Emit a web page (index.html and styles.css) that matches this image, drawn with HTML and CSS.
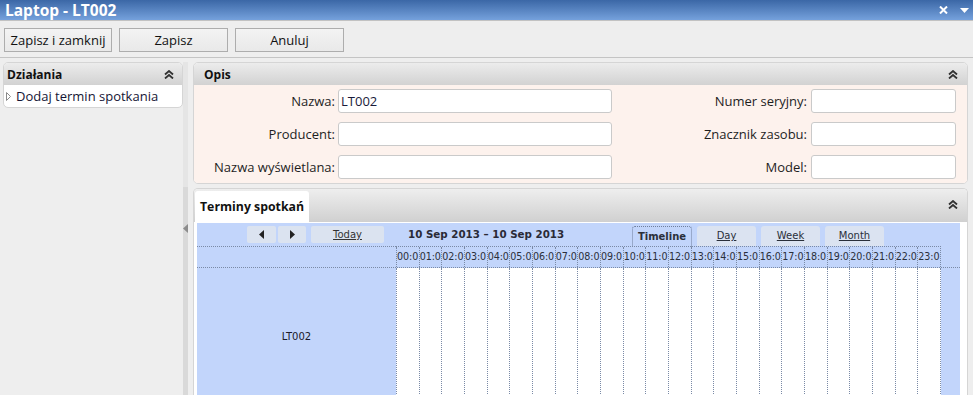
FILE: index.html
```html
<!DOCTYPE html>
<html lang="pl">
<head>
<meta charset="utf-8">
<title>Laptop - LT002</title>
<link rel="stylesheet" href="styles.css">
</head>
<body>
<div class="titlebar">
  <span class="title">Laptop - LT002</span>
  <span class="title-icons">
    <svg class="ico-close" width="9" height="8" viewBox="0 0 9 8"><path d="M1 0.5 L8 7.5 M8 0.5 L1 7.5" stroke="#fff" stroke-width="2"/></svg>
    <svg class="ico-menu" width="9" height="5" viewBox="0 0 9 5"><path d="M0 0 H9 L4.5 5 Z" fill="#fff"/></svg>
  </span>
</div>
<div class="toolbar">
  <button class="btn btn-first">Zapisz i zamknij</button>
  <button class="btn">Zapisz</button>
  <button class="btn">Anuluj</button>
</div>
<div class="main">
  <aside class="sidebar">
    <section class="card">
      <header class="card-head head-side">
        <span>Działania</span>
        <svg class="chev" width="10" height="9" viewBox="0 0 10 9"><path d="M1 4.5 L5 1 L9 4.5 M1 8.5 L5 5 L9 8.5" fill="none" stroke="#333" stroke-width="1.8"/></svg>
      </header>
      <div class="action-row">
        <svg class="tri" width="5" height="9" viewBox="0 0 5 9"><path d="M0.5 0.5 L4.5 4.5 L0.5 8.5 Z" fill="none" stroke="#8a8a8a" stroke-width="1"/></svg>
        <span>Dodaj termin spotkania</span>
      </div>
    </section>
  </aside>
  <div class="splitter">
    <svg class="split-arrow" width="5" height="9" viewBox="0 0 5 9"><path d="M5 0 L0 4.5 L5 9 Z" fill="#8c8c8c"/></svg>
  </div>
  <div class="content">
    <section class="card opis">
      <header class="card-head head-opis">
        <span>Opis</span>
        <svg class="chev" width="10" height="9" viewBox="0 0 10 9"><path d="M1 4.5 L5 1 L9 4.5 M1 8.5 L5 5 L9 8.5" fill="none" stroke="#333" stroke-width="1.8"/></svg>
      </header>
      <div class="form">
        <label class="lbl">Nazwa:</label><div class="inp">LT002</div>
        <label class="lbl lbl-r">Numer seryjny:</label><div class="inp"></div>
        <label class="lbl">Producent:</label><div class="inp"></div>
        <label class="lbl lbl-r">Znacznik zasobu:</label><div class="inp"></div>
        <label class="lbl">Nazwa wyświetlana:</label><div class="inp"></div>
        <label class="lbl lbl-r">Model:</label><div class="inp"></div>
      </div>
    </section>
    <section class="card terminy">
      <header class="tabbar">
        <span class="tab">Terminy spotkań</span>
        <svg class="chev" width="10" height="9" viewBox="0 0 10 9"><path d="M1 4.5 L5 1 L9 4.5 M1 8.5 L5 5 L9 8.5" fill="none" stroke="#333" stroke-width="1.8"/></svg>
      </header>
      <div class="sched-wrap">
        <div class="sched">
          <div class="sched-nav">
            <span class="nbtn nbtn-arrow"><svg width="5" height="9" viewBox="0 0 5 9"><path d="M5 0 L0 4.5 L5 9 Z" fill="#222"/></svg></span>
            <span class="nbtn nbtn-arrow nbtn-next"><svg width="5" height="9" viewBox="0 0 5 9"><path d="M0 0 L5 4.5 L0 9 Z" fill="#222"/></svg></span>
            <span class="nbtn nbtn-today">Today</span>
            <span class="sched-date">10 Sep 2013 – 10 Sep 2013</span>
            <div class="view-tabs">
              <span class="vtab vtab-active">Timeline</span>
              <span class="vtab">Day</span>
              <span class="vtab">Week</span>
              <span class="vtab">Month</span>
            </div>
          </div>
          <div class="sched-head">
            <div class="res-head"></div>
            <div class="hours">
              <div class="hour">00:0</div><div class="hour">01:0</div><div class="hour">02:0</div><div class="hour">03:0</div>
              <div class="hour">04:0</div><div class="hour">05:0</div><div class="hour">06:0</div><div class="hour">07:0</div>
              <div class="hour">08:0</div><div class="hour">09:0</div><div class="hour">10:0</div><div class="hour">11:0</div>
              <div class="hour">12:0</div><div class="hour">13:0</div><div class="hour">14:0</div><div class="hour">15:0</div>
              <div class="hour">16:0</div><div class="hour">17:0</div><div class="hour">18:0</div><div class="hour">19:0</div>
              <div class="hour">20:0</div><div class="hour">21:0</div><div class="hour">22:0</div><div class="hour">23:0</div>
            </div>
            <div class="filler"></div>
          </div>
          <div class="sched-body">
            <div class="res-cell">LT002</div>
            <div class="cells">
              <div class="cell"></div><div class="cell"></div><div class="cell"></div><div class="cell"></div>
              <div class="cell"></div><div class="cell"></div><div class="cell"></div><div class="cell"></div>
              <div class="cell"></div><div class="cell"></div><div class="cell"></div><div class="cell"></div>
              <div class="cell"></div><div class="cell"></div><div class="cell"></div><div class="cell"></div>
              <div class="cell"></div><div class="cell"></div><div class="cell"></div><div class="cell"></div>
              <div class="cell"></div><div class="cell"></div><div class="cell"></div><div class="cell"></div>
            </div>
            <div class="filler"></div>
          </div>
        </div>
      </div>
    </section>
  </div>
</div>
</body>
</html>
```

FILE: styles.css
```css
* { box-sizing: border-box; }

html, body {
  margin: 0;
  padding: 0;
}

body {
  width: 973px;
  height: 395px;
  overflow: hidden;
  background: #eeeeee;
  font-family: "Open Sans", "Noto Sans", sans-serif;
  font-size: 13px;
  color: #1b1b1b;
}

/* ---------- title bar ---------- */
.titlebar {
  height: 21px;
  background: linear-gradient(#3b67a6, #75a1dc);
  border-bottom: 1px solid #c2c2c2;
  display: flex;
  align-items: center;
  justify-content: space-between;
  padding: 0 4px 0 5px;
}

.title {
  color: #fff;
  font-weight: 700;
  font-size: 15.5px;
  line-height: 20px;
}

.title-icons {
  display: flex;
  align-items: center;
  gap: 12px;
}

.ico-close { margin-top: -1px; }

/* ---------- toolbar ---------- */
.toolbar {
  height: 37px;
  border-bottom: 1px solid #c4c4c4;
  display: flex;
  gap: 7px;
  padding: 7px 4px 0 4px;
}

.btn {
  width: 109px;
  height: 24px;
  margin: 0;
  padding: 0;
  border: 1px solid #adadad;
  background: linear-gradient(#f3f3f3, #e9e9e9);
  font-family: inherit;
  font-size: 13px;
  color: #111;
}

.btn-first { width: 108px; }

/* ---------- main ---------- */
.main {
  display: flex;
  height: 337px;
  padding-top: 4px;
}

.sidebar {
  width: 183px;
  padding-left: 3px;
}

.card {
  background: #fff;
  border: 1px solid #d5d5d5;
  border-radius: 5px;
  overflow: hidden;
}

.card-head {
  height: 22px;
  background: linear-gradient(#ececec, #d2d2d2);
  display: flex;
  align-items: center;
  justify-content: space-between;
  font-weight: 700;
  font-size: 12px;
  color: #111;
}

.head-side { padding: 0 8px 0 3px; }
.head-opis { padding: 0 9px 0 10px; }

.action-row {
  height: 22px;
  display: flex;
  align-items: center;
  gap: 5px;
  padding-left: 2px;
  font-size: 13px;
  color: #151535;
}

/* ---------- splitter ---------- */
.splitter {
  width: 10px;
  display: flex;
  flex-direction: column;
  background-image: linear-gradient(#e5e5e5 0 125px, #d9d9d9 125px);
  background-size: 5px 100%;
  background-repeat: no-repeat;
}

.split-arrow {
  margin-top: 162px;
}

/* ---------- content ---------- */
.content {
  width: 775px;
  display: flex;
  flex-direction: column;
  gap: 4px;
}

.opis {
  height: 122px;
}

.form {
  background: #fdf2ed;
  height: 100px;
  display: grid;
  grid-template-columns: 144px 274px 199px 145px;
  grid-auto-rows: 24px;
  row-gap: 9px;
  padding-top: 4px;
  align-items: center;
}

.lbl {
  text-align: right;
  padding-right: 3px;
  font-size: 13px;
  color: #1e1e1e;
}

.lbl-r { padding-right: 4px; }

.inp {
  height: 24px;
  background: #fff;
  border: 1px solid #cacaca;
  border-radius: 3px;
  padding: 0 2px;
  line-height: 22px;
  font-size: 13px;
  color: #1a1a3a;
}

/* ---------- terminy ---------- */
.terminy {
  flex: 1;
  border-bottom: none;
  border-bottom-left-radius: 0;
  border-bottom-right-radius: 0;
}

.tabbar {
  height: 33px;
  background: linear-gradient(#eeeeee, #d0d0d0);
  display: flex;
  align-items: flex-end;
  justify-content: space-between;
  padding: 0 9px 0 1px;
}

.tab {
  height: 31px;
  background: #fff;
  padding: 0 5px;
  display: flex;
  align-items: center;
  font-weight: 700;
  font-size: 12.3px;
  color: #111;
  border-radius: 3px 3px 0 0;
}

.tabbar .chev { align-self: center; margin-top: -2px; }

.sched-wrap {
  padding: 1px 7px 0 3px;
  background: #fff;
}

.sched {
  background: #c2d5fb;
  font-family: "DejaVu Sans", sans-serif;
  font-size: 10px;
  color: #2a2f3a;
}

.sched-nav {
  height: 23px;
  display: flex;
  align-items: flex-start;
  padding-left: 50px;
}

.nbtn {
  margin-top: 3px;
  height: 17px;
  background: #dbe3f0;
  border-radius: 2px;
  display: flex;
  align-items: center;
  justify-content: center;
}

.nbtn-arrow { width: 29px; }
.nbtn-next { width: 28px; margin-left: 2px; }

.nbtn-today {
  width: 73px;
  margin-left: 5px;
  text-decoration: underline;
  color: #333;
}

.sched-date {
  margin-left: 24px;
  margin-top: 5px;
  font-weight: 700;
  font-size: 10.3px;
  color: #2a2a36;
}

.view-tabs {
  margin-left: auto;
  margin-right: 76px;
  display: flex;
  gap: 5px;
  align-self: flex-end;
}

.vtab {
  width: 59px;
  height: 20px;
  background: #dbe3f1;
  border-radius: 3px 3px 0 0;
  display: flex;
  align-items: center;
  justify-content: center;
  text-decoration: underline;
  color: #2a2f3a;
  padding-bottom: 1px;
}

.vtab-active {
  width: 60px;
  background: #c2d5fb;
  border: 1px dotted #6f7f9c;
  border-bottom: none;
  text-decoration: none;
  font-weight: 700;
  margin-bottom: -1px;
  height: 21px;
}

.sched-head {
  height: 22px;
  display: flex;
  border-bottom: 1px dotted #7a8aa6;
}

.res-head {
  width: 199px;
  border-top: 1px dotted #7a8aa6;
}

.hours {
  width: 545px;
  display: grid;
  grid-template-columns: repeat(24, 1fr);
  border-top: 1px dotted #7a8aa6;
  border-right: 1px dotted #7a8aa6;
}

.hour {
  border-left: 1px dotted #7a8aa6;
  overflow: hidden;
  white-space: nowrap;
  line-height: 20px;
  font-size: 9.6px;
  letter-spacing: -0.1px;
}

.filler { flex: 1; }

.sched-body {
  height: 136px;
  display: flex;
}

.res-cell {
  width: 199px;
  display: flex;
  align-items: center;
  justify-content: center;
  color: #1a1a2a;
}

.cells {
  width: 545px;
  display: grid;
  grid-template-columns: repeat(24, 1fr);
  background: #fff;
  border-right: 1px dotted #7a8aa6;
}

.cell {
  border-left: 1px dotted #7a8aa6;
}
```
